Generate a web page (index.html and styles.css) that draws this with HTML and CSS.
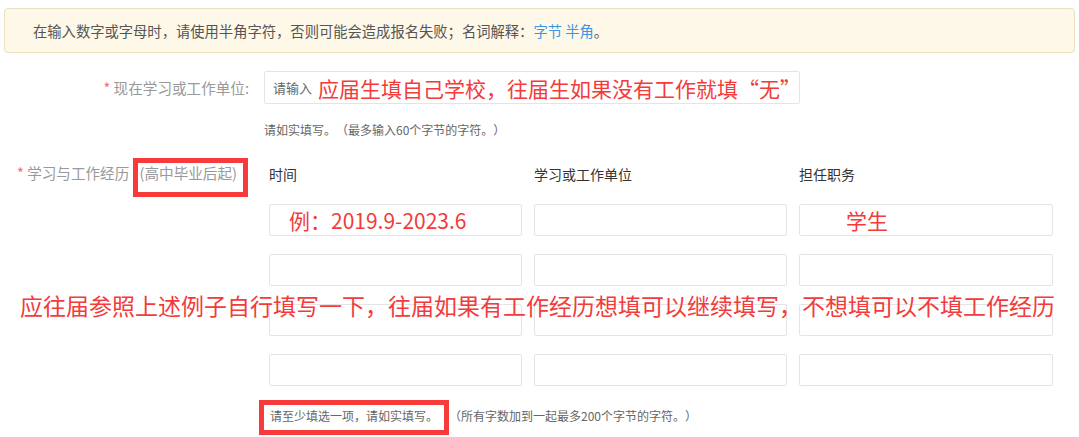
FILE: index.html
```html
<!DOCTYPE html>
<html lang="zh-CN">
<head>
  <meta charset="UTF-8">
  <meta name="viewport" content="width=device-width, initial-scale=1.0">
  <title>报名信息</title>
  <link rel="stylesheet" href="styles.css">
</head>
<body>

<!-- Tip bar -->
<div class="notice">
  在输入数字或字母时，请使用半角字符，否则可能会造成报名失败；名词解释：<a href="#">字节</a> <a href="#">半角</a>。
</div>

<div class="form">
  <!-- Current unit -->
  <div class="row row-unit">
    <div class="label"><span class="star">*</span> 现在学习或工作单位:</div>
    <div class="field">
      <div class="input wide">
        <span class="ph">请输入</span><span class="note note-unit">应届生填自己学校，往届生如果没有工作就填“无”</span>
      </div>
      <div class="help">请如实填写。（最多输入60个字节的字符。）</div>
    </div>
  </div>

  <!-- Resume -->
  <div class="row row-resume">
    <div class="label label-resume"><span class="star">*</span> 学习与工作经历 <span class="mark mark-label">(高中毕业后起)</span></div>
    <div class="field">
      <div class="grid">
        <div class="head">时间</div>
        <div class="head">学习或工作单位</div>
        <div class="head">担任职务</div>

        <div class="input"><span class="note note-time">例：2019.9-2023.6</span></div>
        <div class="input"></div>
        <div class="input"><span class="note note-job">学生</span></div>

        <div class="input"></div>
        <div class="input"></div>
        <div class="input"></div>

        <div class="input"></div>
        <div class="input"></div>
        <div class="input"></div>

        <div class="input"></div>
        <div class="input"></div>
        <div class="input"></div>
      </div>
      <div class="help help-bottom"><span class="mark mark-help">请至少填选一项，请如实填写。</span>（所有字数加到一起最多200个字节的字符。）</div>
    </div>
  </div>
</div>

<!-- annotation written over the table -->
<div class="note note-big">应往届参照上述例子自行填写一下，往届如果有工作经历想填可以继续填写，不想填可以不填工作经历</div>

</body>
</html>
```

FILE: styles.css
```css
/* Global */
body {
  margin: 0;
  font-family: "Noto Sans CJK SC", "Noto Sans", sans-serif;
  color: #333;
  background: #fff;
  position: relative;
  text-spacing-trim: space-all;
}
a {
  color: #3b97e3;
  text-decoration: none;
}

/* Tip bar */
.notice {
  margin: 8px 4px 0;
  height: 43px;
  line-height: 43px;
  padding-left: 28px;
  font-size: 14.3px;
  color: #555;
  background-color: #fdf8e8;
  border: 1px solid #ebe0c2;
  border-radius: 4px;
}

/* Form rows */
.row {
  display: flex;
  align-items: flex-start;
}
.label {
  width: 250px;
  flex-shrink: 0;
  text-align: right;
  font-size: 14.6px;
  color: #999;
  box-sizing: border-box;
}
.star {
  color: #f56c6c;
}
.field {
  padding-left: 14px;
}
.row-unit {
  margin-top: 18px;
}
.row-unit .label {
  line-height: 33px;
  padding-right: 1px;
}
.input {
  box-sizing: border-box;
  height: 32px;
  background: #fff;
  border: 1px solid #e4e4e4;
  border-radius: 2px;
  white-space: nowrap;
  overflow: visible;
}
.input.wide {
  width: 536px;
  height: 33px;
  display: flex;
  align-items: center;
  padding-left: 8px;
}
.ph {
  font-size: 13px;
  color: #666;
  margin-right: 6px;
}
.help {
  margin-top: 17px;
  font-size: 12px;
  line-height: 18px;
  color: #666;
}

/* Resume table */
.row-resume {
  margin-top: 19px;
}
.label-resume {
  padding-right: 2px;
  line-height: 20px;
}
.mark {
  display: inline-block;
  border: 5px solid #f73a3a;
  background: #fff;
}
.mark-label {
  padding: 0 6px 9px 2px;
}
.grid {
  display: grid;
  grid-template-columns: 253px 253px 254px;
  column-gap: 12px;
  row-gap: 18px;
  padding: 6px 0 0 5px;
}
.head {
  font-size: 14px;
  line-height: 20px;
  color: #333;
  margin-bottom: 2px;
}
.grid .input {
  display: flex;
  align-items: center;
}
.help-bottom {
  margin: 14px 0 0 -5px;
}
.mark-help {
  padding: 2px 6px 5px 6px;
}

/* Red annotations */
.note {
  color: #f33b3b;
  white-space: nowrap;
}
.note-unit {
  font-size: 21px;
  line-height: 30px;
}
.note-time {
  font-size: 21px;
  padding-left: 19px;
}
.note-job {
  font-size: 21px;
  padding-left: 46px;
}
.note-big {
  position: absolute;
  left: 20px;
  top: 289px;
  font-size: 23px;
  line-height: 32px;
}
```
